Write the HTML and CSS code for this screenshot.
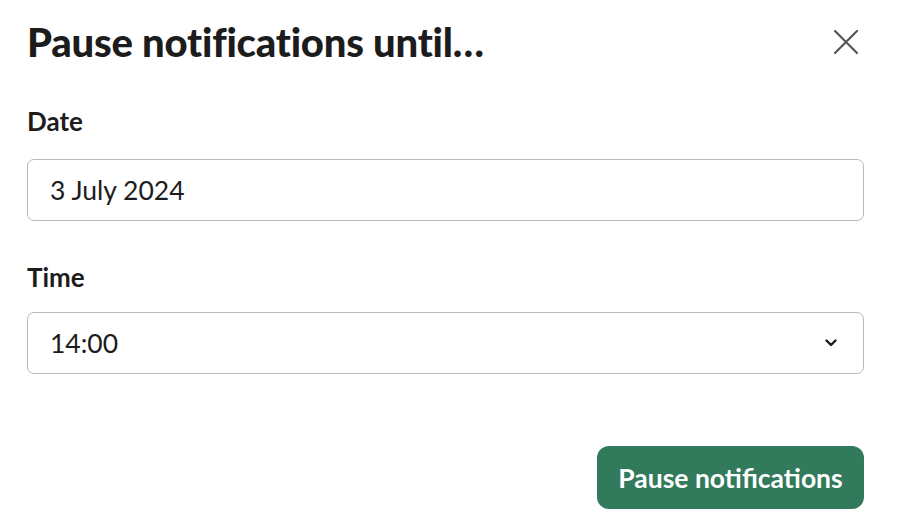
FILE: index.html
```html
<!DOCTYPE html>
<html lang="en">
<head>
  <meta charset="UTF-8">
  <title>Pause notifications</title>
  <link rel="stylesheet" href="styles.css">
</head>
<body>
<div class="dialog">
  <div class="dialog_head">
    <h1 class="dialog_title">Pause notifications until…</h1>
    <button class="close_btn" aria-label="Close">
      <svg width="26" height="26" viewBox="0 0 26 26">
        <path d="M2 2 L24 24 M24 2 L2 24" stroke="#555555" stroke-width="2.2" stroke-linecap="round" fill="none"/>
      </svg>
    </button>
  </div>

  <label class="field_label first_label" for="date">Date</label>
  <div class="field">
    <input type="text" id="date" class="field_input" value="3 July 2024">
  </div>

  <label class="field_label time_label" for="time">Time</label>
  <div class="field select_field">
    <span class="select_value">14:00</span>
    <svg class="chevron" width="12" height="8" viewBox="0 0 12 8">
      <path d="M1.5 1.5 L6 6 L10.5 1.5" stroke="#1d1c1d" stroke-width="2.4" stroke-linecap="round" stroke-linejoin="round" fill="none"/>
    </svg>
  </div>

  <div class="dialog_foot">
    <button class="primary_btn">Pause notifications</button>
  </div>
</div>
</body>
</html>
```

FILE: styles.css
```css
body {
  margin: 0;
  font-family: Lato, "Noto Sans", sans-serif;
  color: #1d1c1d;
  background: #ffffff;
}
.dialog {
  padding: 18px 36px 0 27px;
  display: flex;
  flex-direction: column;
}
.dialog_head {
  display: flex;
  justify-content: space-between;
  align-items: center;
}
.dialog_title {
  margin: 0;
  font-size: 40px;
  font-weight: 900;
  line-height: 48px;
  letter-spacing: -0.2px;
}
.close_btn {
  border: none;
  background: none;
  padding: 0;
  margin-right: 5px;
  display: flex;
}
.field_label {
  font-size: 26px;
  font-weight: 700;
  line-height: 32px;
}
.first_label {
  margin-top: 39px;
}
.field_label + .field {
  margin-top: 22px;
}
.time_label {
  margin-top: 40px;
}
.time_label + .field {
  margin-top: 19px;
}
.field {
  height: 62px;
  box-sizing: border-box;
  border: 1px solid #b9b9b9;
  border-radius: 7px;
  display: flex;
  align-items: center;
}
.field_input {
  border: none;
  outline: none;
  background: none;
  width: 100%;
  padding: 0 0 0 22px;
  font-family: inherit;
  font-size: 26.5px;
  color: #1d1c1d;
}
.select_field {
  justify-content: space-between;
  padding: 0 26px 0 22px;
}
.select_field + .dialog_foot {
  margin-top: 72px;
}
.select_value {
  font-size: 26.5px;
}
.dialog_foot {
  display: flex;
  justify-content: flex-end;
}
.primary_btn {
  height: 63px;
  width: 267px;
  border: none;
  border-radius: 12px;
  background: #317a5b;
  color: #ffffff;
  font-family: inherit;
  font-size: 26.5px;
  font-weight: 700;
}
```
